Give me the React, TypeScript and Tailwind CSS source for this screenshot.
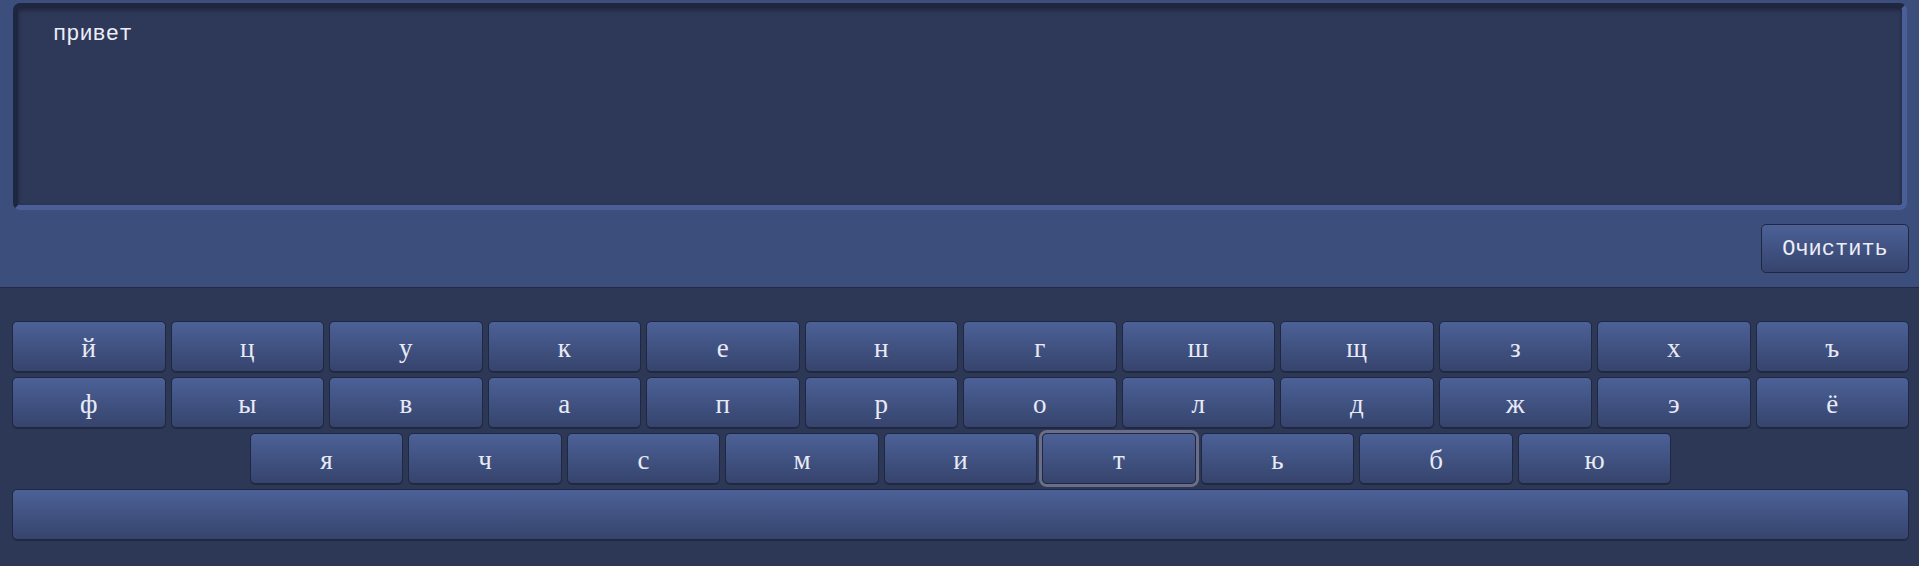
import React, { useState } from 'react';

const rows: string[][] = [
  ['й', 'ц', 'у', 'к', 'е', 'н', 'г', 'ш', 'щ', 'з', 'х', 'ъ'],
  ['ф', 'ы', 'в', 'а', 'п', 'р', 'о', 'л', 'д', 'ж', 'э', 'ё'],
  ['я', 'ч', 'с', 'м', 'и', 'т', 'ь', 'б', 'ю'],
];

const keyBase =
  "h-[51px] rounded-[5px] border border-[#1f2742] bg-gradient-to-b from-[#4c6197] to-[#36446d] text-[#e8eaf6] shadow-[0_1px_0_rgba(0,0,0,0.25)]";

function App() {
  const [text, setText] = useState('привет');
  const [focused, setFocused] = useState('т');

  const press = (ch: string) => {
    setFocused(ch);
    setText(prev => prev + ch);
  };

  return (
    <div className="min-h-screen w-full bg-[#2d3756] font-['Liberation_Mono',monospace]">
      {/* Text area + clear button */}
      <div className="bg-[#3c4e7c] border-b border-[#222a45] pt-[3px] pl-[13px] pr-[10px] pb-[14px]">
        <textarea
          value={text}
          onChange={e => setText(e.target.value)}
          spellCheck={false}
          className="block w-[calc(100%-2px)] h-[207px] resize-none rounded-[7px] border-[5px] border-[#4a5e98] border-t-[#1f2740] border-l-[#1f2740] bg-[#2e3858] pt-[14px] pl-[35px] text-[22px] leading-[26px] text-[#eceef8] outline-none shadow-[inset_0_2px_4px_rgba(0,0,0,0.35)] font-['Liberation_Mono',monospace]"
        />
        <div className="flex justify-end mt-[14px]">
          <button
            onClick={() => setText('')}
            className="h-[49px] w-[148px] rounded-[5px] border border-[#1f2742] bg-gradient-to-b from-[#4c6197] to-[#36446d] pt-[2px] text-[22px] text-[#eceef8] font-['Liberation_Mono',monospace]"
          >
            Очистить
          </button>
        </div>
      </div>

      {/* Keyboard */}
      <div className="pt-[33px] pl-[12px] pr-[10px] flex flex-col gap-[5px]">
        {rows.map((row, i) => (
          <div key={i} className={i === 2 ? 'flex justify-center gap-[5px]' : 'flex gap-[5px]'}>
            {row.map(ch => (
              <button
                key={ch}
                onClick={() => press(ch)}
                className={`${keyBase} ${i === 2 ? 'w-[153.5px]' : 'flex-1'} pt-[3px] text-[27px] font-['Liberation_Serif',serif] ${
                  focused === ch ? 'ring-[3px] ring-[#6b6e88]' : ''
                }`}
              >
                {ch}
              </button>
            ))}
          </div>
        ))}
        <button onClick={() => press(' ')} className={`${keyBase} w-full`} />
      </div>
    </div>
  );
}

export default App;
